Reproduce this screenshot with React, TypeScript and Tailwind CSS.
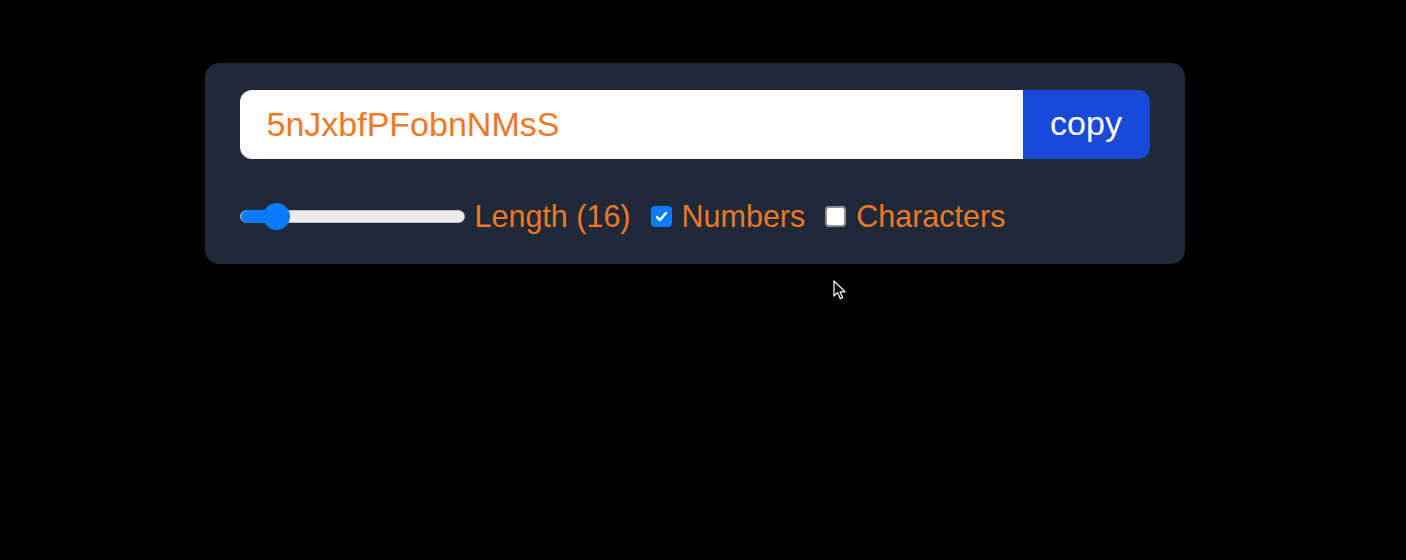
import React, { useState } from 'react';

const font = { fontFamily: '"Liberation Sans", Arial, sans-serif' };

function Check({ on }: { on: boolean }) {
    return on ? (
        <div className="w-[21px] h-[21px] rounded-[4px] bg-[#0a7aff] flex items-center justify-center shrink-0">
            <svg width="15" height="15" viewBox="0 0 16 16" fill="none">
                <path d="M3.2 8.6 6.4 11.8 12.8 4.2" stroke="white" strokeWidth="2.6" strokeLinecap="round" strokeLinejoin="round" />
            </svg>
        </div>
    ) : (
        <div className="w-[21px] h-[21px] rounded-[4px] bg-white border-2 border-[#8a8d93] shrink-0" />
    );
}

export default function App() {
    const [length] = useState(16);
    const [numbers] = useState(true);
    const [chars] = useState(false);

    return (
        <div className="bg-black min-h-[560px] w-full relative pt-[63px] pr-[17px] flex justify-center items-start" style={font}>
            <div className="w-[980px] bg-[#1f2937] rounded-[14px] px-[35px] pt-[27px] pb-[28px]">
                <div className="flex h-[69px]">
                    <input
                        readOnly
                        value="5nJxbfPFobnNMsS"
                        className="flex-1 min-w-0 bg-white rounded-l-[12px] pl-[27px] text-[34px] text-[#ee7826] outline-none"
                        style={font}
                    />
                    <button className="w-[127px] bg-[#1a49d8] rounded-r-[12px] text-white text-[34px] pb-[3px]">copy</button>
                </div>

                <div className="flex items-center h-[40px] mt-[37px] text-[30.5px] text-[#ee7826]">
                    {/* slider */}
                    <div className="relative w-[225px] h-[13px] rounded-full bg-[#ebebeb] border border-[#b9bbbe] shrink-0">
                        <div className="absolute left-0 top-[-1px] h-[13px] w-[36px] rounded-full bg-[#0a7aff]" />
                        <div className="absolute left-[22px] top-[-8px] w-[27px] h-[27px] rounded-full bg-[#0a7aff]" />
                    </div>
                    <span className="ml-[10px] leading-none">Length ({length})</span>
                    <div className="ml-[20px]"><Check on={numbers} /></div>
                    <span className="ml-[10px] leading-none">Numbers</span>
                    <div className="ml-[20px]"><Check on={chars} /></div>
                    <span className="ml-[10px] leading-none">Characters</span>
                </div>
            </div>

            <svg className="absolute left-[833px] top-[280px]" width="13" height="20" viewBox="0 0 13 20">
                <path d="M1 1 L1 16 L4.6 12.6 L7.2 18.6 L9.6 17.6 L7 11.8 L12 11.8 Z" fill="black" stroke="white" strokeWidth="1.2" strokeLinejoin="round" />
            </svg>
        </div>
    );
}
